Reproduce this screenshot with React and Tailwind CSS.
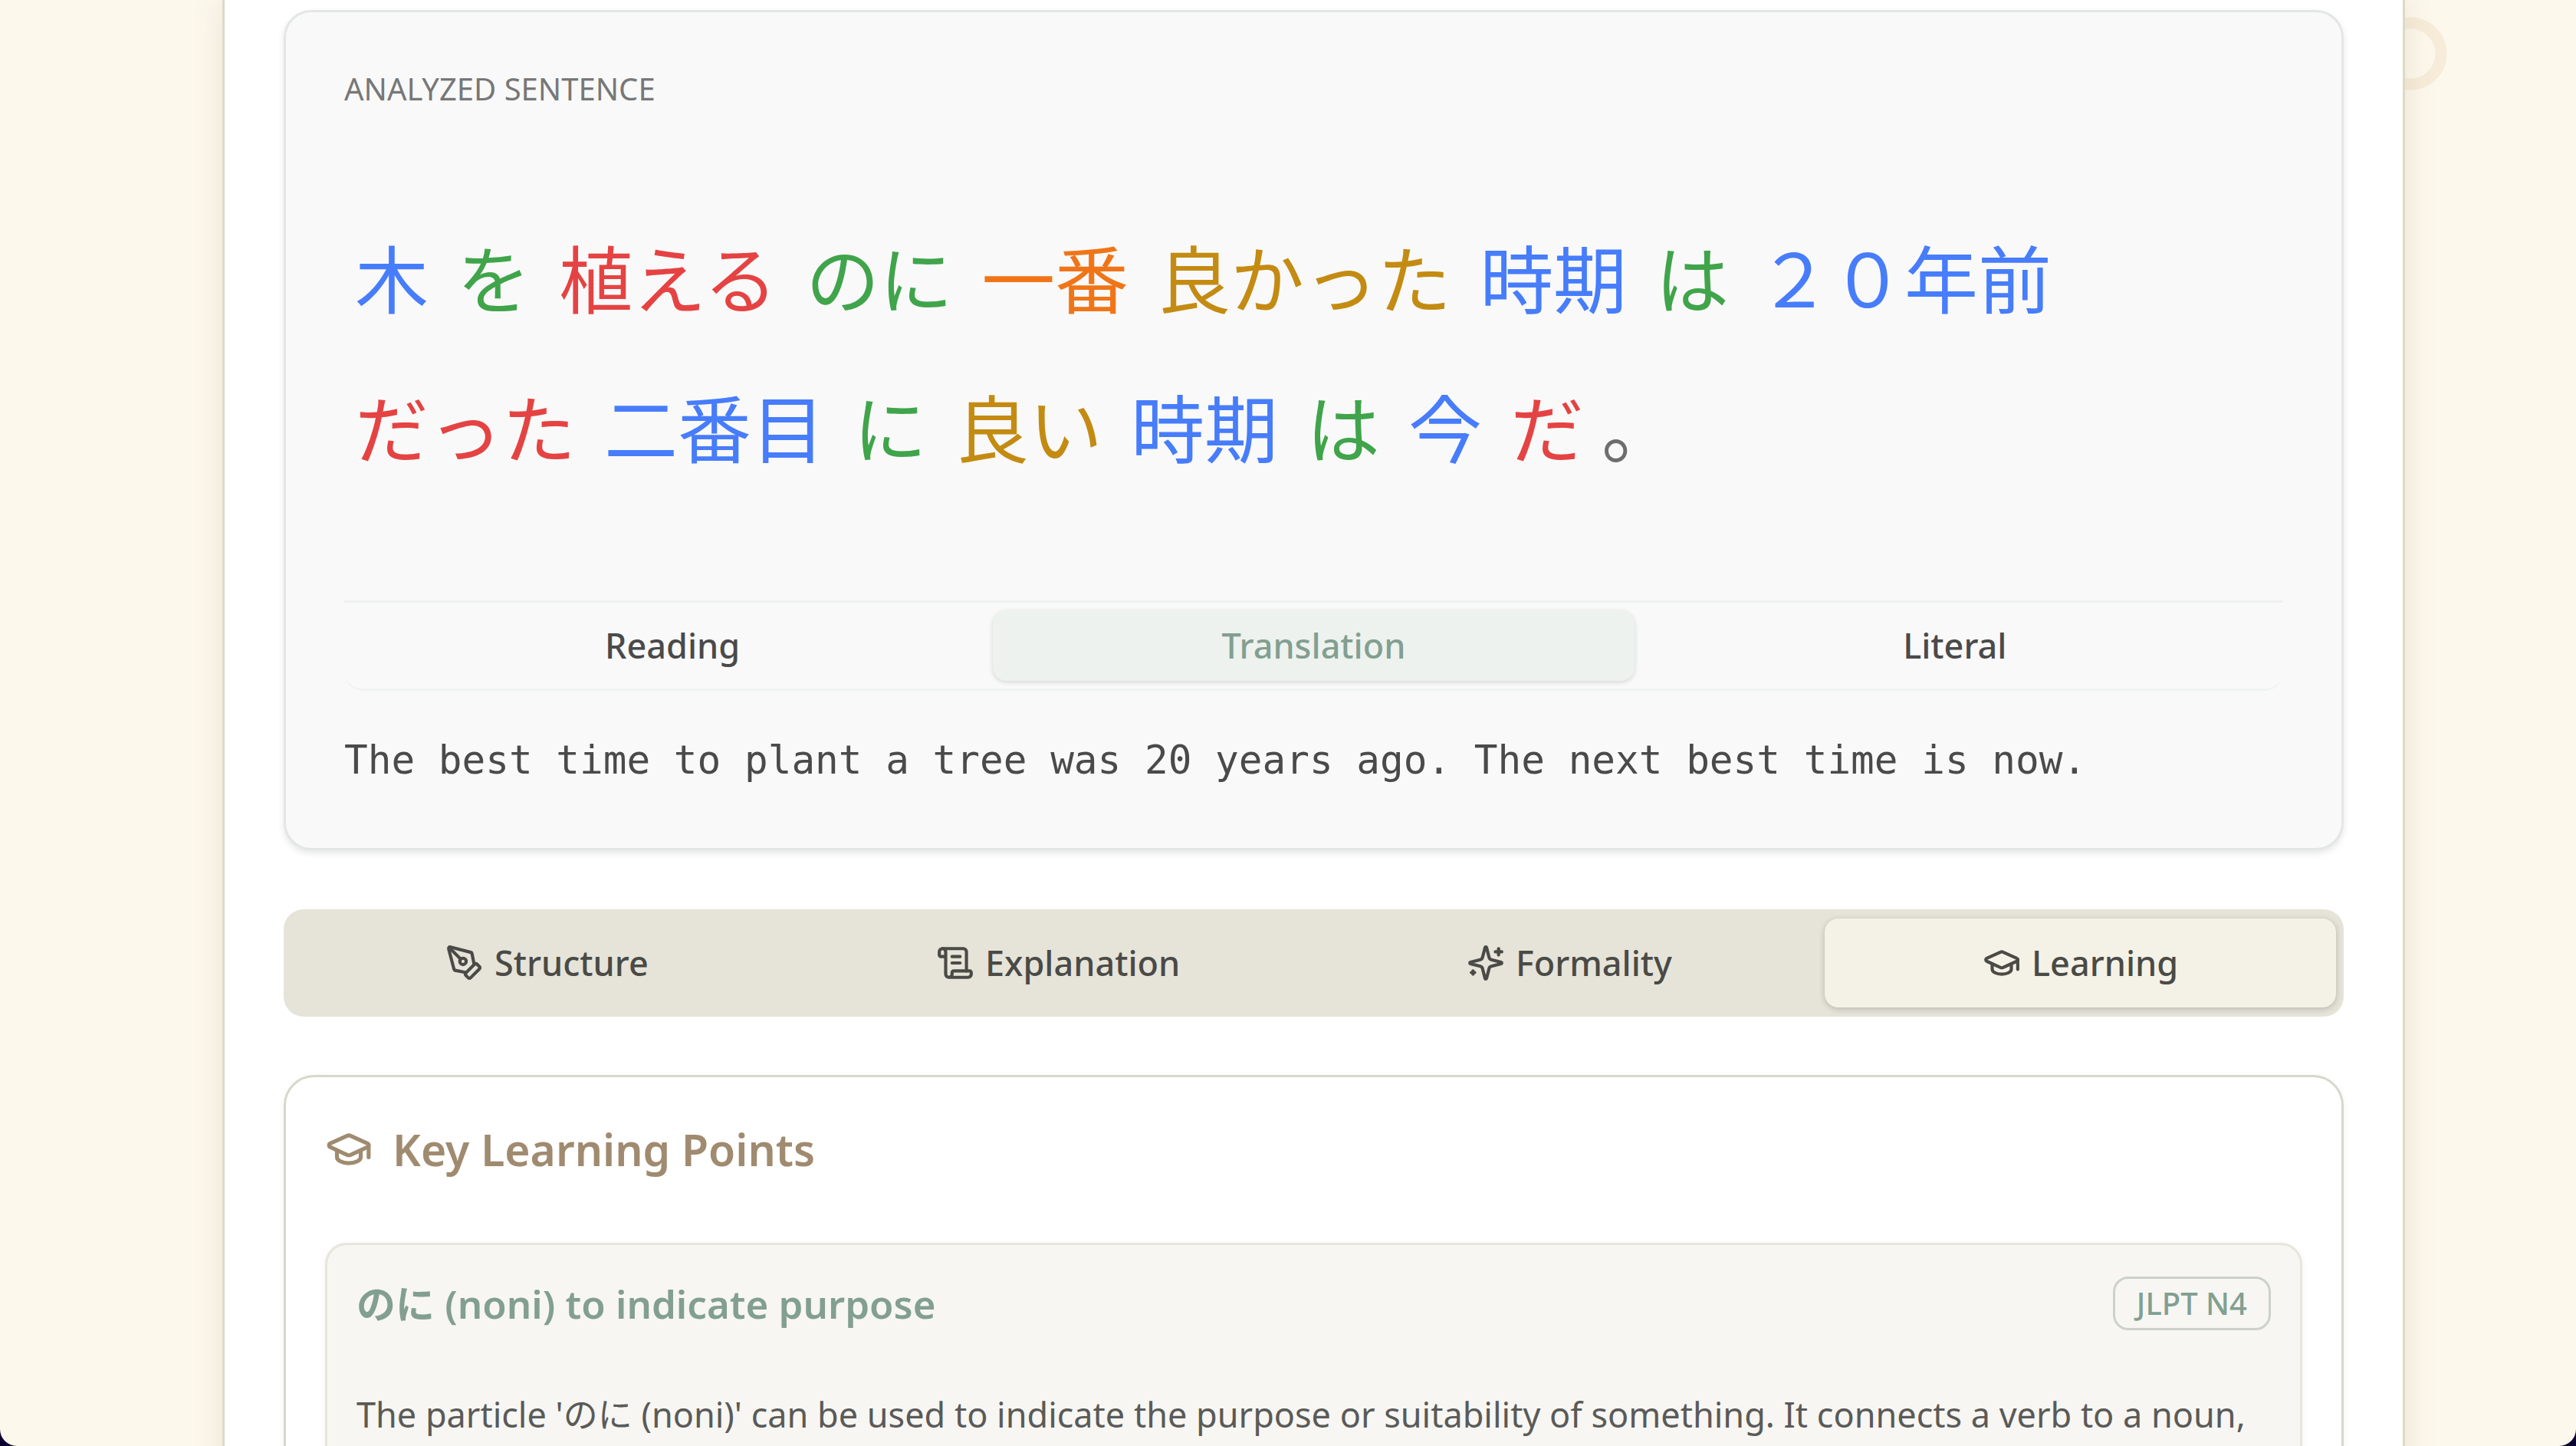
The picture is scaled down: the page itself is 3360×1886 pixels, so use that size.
import React, { useState } from "react";

const tokens = [
  ["木", "text-[#477dfb]"],
  ["を", "text-[#40a44b]"],
  ["植える", "text-[#e54343]"],
  ["のに", "text-[#40a44b]"],
  ["一番", "text-[#f07518]"],
  ["良かった", "text-[#c48b12]"],
  ["時期", "text-[#477dfb]"],
  ["は", "text-[#40a44b]"],
  ["２０年前", "text-[#477dfb]"],
  ["だった", "text-[#e54343]"],
  ["二番目", "text-[#477dfb]"],
  ["に", "text-[#40a44b]"],
  ["良い", "text-[#c48b12]"],
  ["時期", "text-[#477dfb]"],
  ["は", "text-[#40a44b]"],
  ["今", "text-[#477dfb]"],
  ["だ", "text-[#e54343]"],
];

function Icon({ className, children }) {
  return (
    <svg
      viewBox="0 0 24 24"
      fill="none"
      stroke="currentColor"
      strokeWidth="2"
      strokeLinecap="round"
      strokeLinejoin="round"
      aria-hidden="true"
      className={className}
    >
      {children}
    </svg>
  );
}

function PenIcon({ className }) {
  return (
    <Icon className={className}>
      <path d="M15.707 21.293a1 1 0 0 1-1.414 0l-1.586-1.586a1 1 0 0 1 0-1.414l5.586-5.586a1 1 0 0 1 1.414 0l1.586 1.586a1 1 0 0 1 0 1.414z" />
      <path d="m18 13-1.375-6.874a1 1 0 0 0-.746-.776L3.235 2.028a1 1 0 0 0-1.207 1.207L5.35 15.879a1 1 0 0 0 .776.746L13 18" />
      <path d="m2.3 2.3 7.286 7.286" />
      <circle cx="11" cy="11" r="2" />
    </Icon>
  );
}

function ScrollIcon({ className }) {
  return (
    <Icon className={className}>
      <path d="M15 12h-5" />
      <path d="M15 8h-5" />
      <path d="M19 17V5a2 2 0 0 0-2-2H4" />
      <path d="M8 21h12a2 2 0 0 0 2-2v-1a1 1 0 0 0-1-1H11a1 1 0 0 0-1 1v1a2 2 0 1 1-4 0V5a2 2 0 1 0-4 0v2a1 1 0 0 0 1 1h3" />
    </Icon>
  );
}

function SparklesIcon({ className }) {
  return (
    <Icon className={className}>
      <path d="M9.937 15.5A2 2 0 0 0 8.5 14.063l-6.135-1.582a.5.5 0 0 1 0-.962L8.5 9.936A2 2 0 0 0 9.937 8.5l1.582-6.135a.5.5 0 0 1 .963 0L14.063 8.5A2 2 0 0 0 15.5 9.937l6.135 1.581a.5.5 0 0 1 0 .964L15.5 14.063a2 2 0 0 0-1.437 1.437l-1.582 6.135a.5.5 0 0 1-.963 0z" />
      <path d="M20 3v4" />
      <path d="M22 5h-4" />
      <path d="M4 17v2" />
      <path d="M5 18H3" />
    </Icon>
  );
}

function CapIcon({ className }) {
  return (
    <Icon className={className}>
      <path d="M21.42 10.922a1 1 0 0 0-.019-1.838L12.83 5.18a2 2 0 0 0-1.66 0L2.6 9.08a1 1 0 0 0 0 1.832l8.57 3.908a2 2 0 0 0 1.66 0z" />
      <path d="M22 10v6" />
      <path d="M6 12.5V16a6 3 0 0 0 12 0v-3.5" />
    </Icon>
  );
}

const views = ["Reading", "Translation", "Literal"];

const sections = [
  ["Structure", PenIcon],
  ["Explanation", ScrollIcon],
  ["Formality", SparklesIcon],
  ["Learning", CapIcon],
];

function SentenceCard() {
  const [view, setView] = useState("Translation");
  return (
    <section className="rounded-[36px] border-[3px] border-[#e3e7e4] bg-[#f9f9f9] px-[76px] pt-[74px] pb-[78px] shadow-[0_4px_8px_rgba(0,0,0,0.1)]">
      <h2 className="text-[40px] leading-[52px] text-[#777777]">ANALYZED SENTENCE</h2>
      <div
        lang="ja"
        className="mt-[124px] flex flex-wrap gap-x-[9px] text-[96px] leading-[195px]"
      >
        {tokens.map(([text, color], i) => (
          <span key={i} className={`px-[14px] ${color}`}>
            {text}
          </span>
        ))}
        <span className="text-[#6e6e6e]">。</span>
      </div>
      <div className="mt-[127px] border-t-[3px] border-[#eef1ef]">
        <div
          role="tablist"
          aria-label="Sentence view"
          className="grid grid-cols-3 rounded-b-[24px] border-b-[3px] border-[#f0f3f1] px-[10px] pt-[10px] pb-[10px]"
        >
          {views.map((name) => (
            <button
              key={name}
              role="tab"
              aria-selected={view === name}
              onClick={() => setView(name)}
              className={
                view === name
                  ? "h-[92px] rounded-[18px] bg-[#edf2ee] text-[45px] font-medium text-[#829f91] shadow-[0_2px_6px_rgba(0,0,0,0.14)]"
                  : "h-[92px] rounded-[18px] text-[45px] font-medium text-[#4a4a4a]"
              }
            >
              {name}
            </button>
          ))}
        </div>
      </div>
      <p className="mt-[55px] font-['DejaVu_Sans_Mono',monospace] text-[51px] leading-[72px] text-[#4a4a4a]">
        The best time to plant a tree was 20 years ago. The next best time is now.
      </p>
    </section>
  );
}

function SectionTabs() {
  const [section, setSection] = useState("Learning");
  return (
    <div
      role="tablist"
      aria-label="Analysis sections"
      className="mt-[77px] grid grid-cols-4 rounded-[26px] bg-[#e6e4d9] px-[10px] py-3"
    >
      {sections.map(([name, Glyph]) => (
        <button
          key={name}
          role="tab"
          aria-selected={section === name}
          onClick={() => setSection(name)}
          className={
            section === name
              ? "flex h-[116px] items-center justify-center gap-[14px] rounded-[18px] bg-[#f4f2e7] text-[45px] font-medium text-[#4a4a46] shadow-[0_2px_8px_rgba(0,0,0,0.2)]"
              : "flex h-[116px] items-center justify-center gap-[14px] rounded-[18px] text-[45px] font-medium text-[#4a4a46]"
          }
        >
          <Glyph className="size-[50px]" />
          {name}
        </button>
      ))}
    </div>
  );
}

function LearningCard() {
  return (
    <section className="mt-[76px] rounded-[40px] border-[3px] border-[#d8d8ca] bg-white px-[51px] pt-[52px] pb-[60px] shadow-[0_2px_8px_rgba(0,0,0,0.06)]">
      <h2 className="flex items-center gap-[26px] text-[57px] leading-[84px] font-semibold text-[#a08b70]">
        <CapIcon className="size-[62px]" />
        Key Learning Points
      </h2>
      <article className="mt-[80px] rounded-[28px] border-[3px] border-[#e6e6da] bg-[#f7f6f2] px-[38px] pt-[41px] pb-[60px] shadow-[0_2px_8px_rgba(0,0,0,0.06)]">
        <div className="flex items-center justify-between">
          <h3 className="text-[51px] leading-[70px] font-semibold text-[#829f91]">
            のに (noni) to indicate purpose
          </h3>
          <span className="flex h-[70px] items-center rounded-[20px] border-[3px] border-[#ccd1cb] px-[28px] text-[40px] font-medium text-[#829f91]">
            JLPT N4
          </span>
        </div>
        <p className="mt-[74px] text-[45px] leading-[72px] text-[#5a5a58]">
          The particle 'のに (noni)' can be used to indicate the purpose or suitability of something. It connects a verb to a noun,
        </p>
      </article>
    </section>
  );
}

export default function App() {
  return (
    <div className="h-screen overflow-hidden bg-[#0c0030] font-['Noto_Sans','Noto_Sans_CJK_JP',sans-serif]">
      <div className="relative h-full overflow-hidden rounded-b-[22px] bg-[#fdf8ec] pr-[223px] pl-[290px]">
        <svg
          viewBox="0 0 100 100"
          aria-hidden="true"
          className="absolute top-[20px] right-[166px] size-[100px]"
        >
          <circle cx="50" cy="50" r="40" fill="none" stroke="#f7ecd9" strokeWidth="15" />
        </svg>
        <main className="relative min-h-full border-x-[3px] border-[#dcdac9] bg-white px-[77px] pt-[13px] shadow-[0_0_40px_rgba(90,80,50,0.12)]">
          <SentenceCard />
          <SectionTabs />
          <LearningCard />
        </main>
      </div>
    </div>
  );
}
